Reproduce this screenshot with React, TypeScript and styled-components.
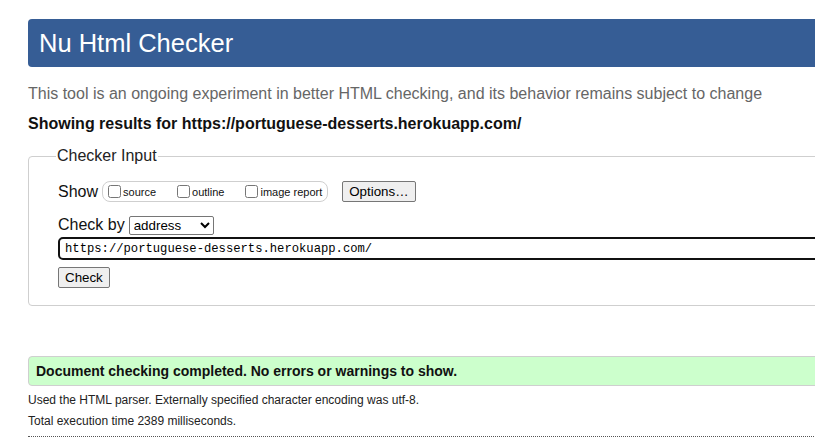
import styled, { createGlobalStyle } from 'styled-components';

const GlobalStyle = createGlobalStyle`
  html, body {
    margin: 0;
    padding: 0;
    overflow: hidden;
    background: #fff;
  }
  body {
    font-family: 'Liberation Sans', Arial, sans-serif;
    color: #111;
  }
`;

const Page = styled.div`
  width: 1000px;
  padding: 19px 0 0 28px;
`;

const Header = styled.h1`
  margin: 0;
  height: 48px;
  padding: 0 11px;
  display: flex;
  align-items: center;
  background: #365d95;
  border-radius: 4px;
  color: #fff;
  font-size: 25.5px;
  font-weight: 400;
`;

const Intro = styled.p`
  margin: 17px 0 0;
  color: #666;
  font-size: 16px;
  line-height: 20px;
`;

const ResultsFor = styled.p`
  margin: 10px 0 0;
  font-size: 16px;
  font-weight: 700;
  line-height: 20px;
`;

const Fieldset = styled.fieldset`
  margin: 13px 0 0;
  padding: 16px 29px 17px;
  border: 1px solid #cfcfcf;
  border-radius: 4px;
`;

const Legend = styled.legend`
  margin-left: -2px;
  padding: 0 1px;
  font-size: 16px;
  color: #222;
`;

const Row = styled.div<{ $gap?: number; $mb?: number }>`
  display: flex;
  align-items: center;
  gap: ${(p) => p.$gap ?? 4}px;
  margin-bottom: ${(p) => p.$mb ?? 0}px;
`;

const Label = styled.span`
  font-size: 16px;
  line-height: 20px;
`;

const OptionGroup = styled.span`
  display: inline-flex;
  align-items: center;
  height: 19px;
  padding: 0 5px 0 4px;
  border: 1px solid #cfcfcf;
  border-radius: 8px;
  margin-right: 10px;
`;

const OptionLabel = styled.label<{ $mr?: number }>`
  display: inline-flex;
  align-items: center;
  font-size: 11px;
  margin-right: ${(p) => p.$mr ?? 0}px;

  input {
    margin: 0 2px 0 1px;
    width: 13px;
    height: 13px;
  }
`;

const NativeButton = styled.button`
  font-family: 'Liberation Sans', Arial, sans-serif;
  font-size: 13.33px;
  height: 21px;
  padding: 1px 6px;
  background: #efefef;
  border: 1px solid #767676;
  border-radius: 2px;
  color: #000;
`;

const Select = styled.select`
  font-family: 'Liberation Sans', Arial, sans-serif;
  font-size: 13.33px;
  width: 85px;
  height: 19px;
  border: 1px solid #767676;
  border-radius: 2px;
  background: #fff;
  color: #000;
`;

const UrlInput = styled.input`
  display: block;
  box-sizing: border-box;
  width: 100%;
  height: 23px;
  margin: 2px 0 7px;
  padding: 0 5px;
  border: 2px solid #111;
  border-radius: 5px;
  font-family: 'Liberation Mono', 'DejaVu Sans Mono', monospace;
  font-size: 12.2px;
  color: #000;
  outline: none;
`;

const SuccessBox = styled.div`
  margin-top: 50px;
  padding: 6px 7px 5px;
  background: #ccffcc;
  border: 1px solid #cfcfcf;
  border-radius: 4px;
  font-size: 14px;
  font-weight: 700;
  line-height: 17px;
`;

const Detail = styled.p`
  margin: 7px 0 0;
  font-size: 12px;
  line-height: 14px;
  color: #222;
`;

const Divider = styled.hr`
  margin: 8px 0 0;
  border: 0;
  border-top: 1px dotted #555;
`;

export default function App() {
  const url = 'https://portuguese-desserts.herokuapp.com/';

  return (
    <>
      <GlobalStyle />
      <Page>
        <Header>Nu Html Checker</Header>
        <Intro>
          This tool is an ongoing experiment in better HTML checking, and its
          behavior remains subject to change
        </Intro>
        <ResultsFor>Showing results for {url}</ResultsFor>

        <Fieldset>
          <Legend>Checker Input</Legend>
          <Row $gap={4} $mb={13}>
            <Label>Show</Label>
            <OptionGroup>
              <OptionLabel $mr={20}>
                <input type="checkbox" />
                source
              </OptionLabel>
              <OptionLabel $mr={20}>
                <input type="checkbox" />
                outline
              </OptionLabel>
              <OptionLabel>
                <input type="checkbox" />
                image report
              </OptionLabel>
            </OptionGroup>
            <NativeButton>Options…</NativeButton>
          </Row>
          <Row $gap={4}>
            <Label>Check by</Label>
            <Select defaultValue="address">
              <option value="address">address</option>
              <option value="file">file upload</option>
              <option value="text">text input</option>
            </Select>
          </Row>
          <UrlInput defaultValue={url} />
          <NativeButton>Check</NativeButton>
        </Fieldset>

        <SuccessBox>
          Document checking completed. No errors or warnings to show.
        </SuccessBox>
        <Detail>
          Used the HTML parser. Externally specified character encoding was
          utf-8.
        </Detail>
        <Detail>Total execution time 2389 milliseconds.</Detail>
        <Divider />
      </Page>
    </>
  );
}
